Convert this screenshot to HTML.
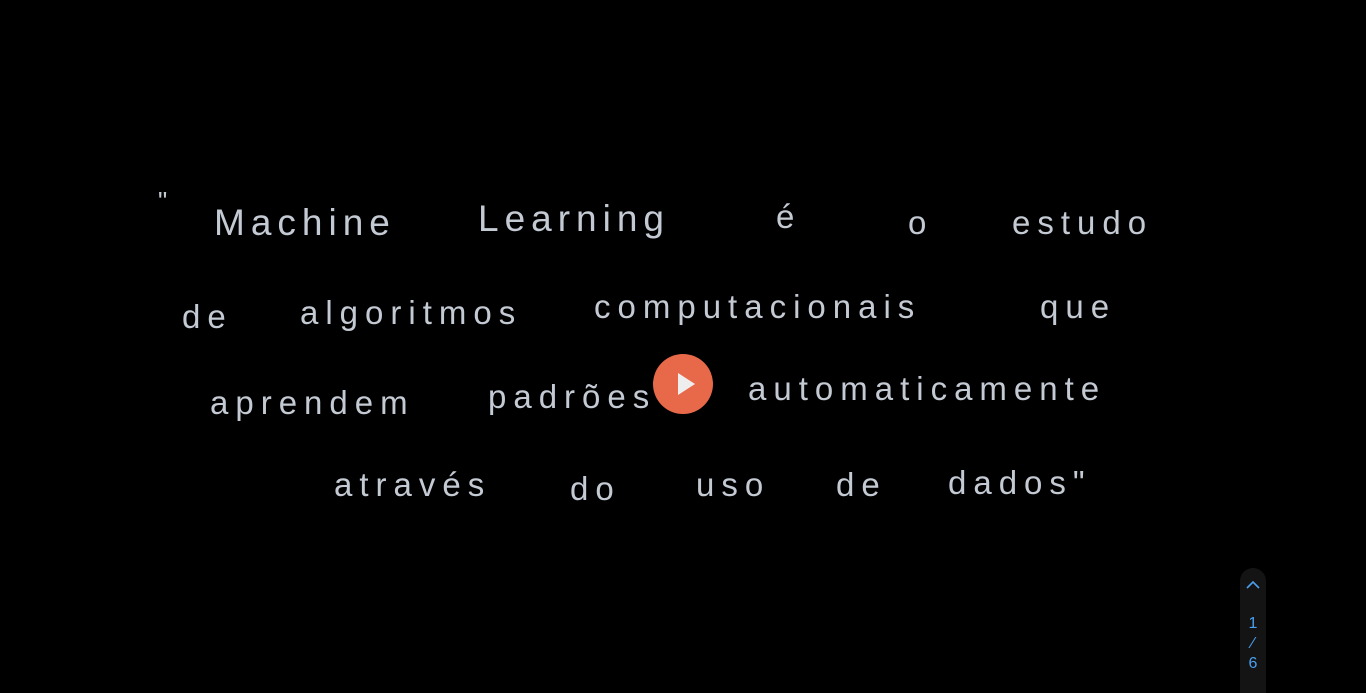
<!DOCTYPE html>
<html><head><style>
html,body{margin:0;width:1366px;height:693px;background:#000;overflow:hidden;position:relative;font-family:"Liberation Sans",sans-serif}
.w{position:absolute;color:#c4cad3;font-size:33px;letter-spacing:7px;font-weight:normal;line-height:1;white-space:nowrap}
.play{position:absolute;left:653px;top:354px;width:60px;height:60px;border-radius:50%;background:#e8694a}
.play:after{content:"";position:absolute;left:25px;top:19px;border-left:17px solid #eee;border-top:11px solid transparent;border-bottom:11px solid transparent}
.pan{position:absolute;left:1240px;top:568px;width:26px;height:140px;border-radius:13px;background:#141414;color:#4a9ff0;text-align:center;font-size:16px}
</style></head><body>
<div class="w" style="left:158px;top:188px;font-size:26px">"</div>
<div class="w" style="left:214px;top:204px;font-size:37px;letter-spacing:6px">Machine</div>
<div class="w" style="left:478px;top:200px;font-size:37px;letter-spacing:6px">Learning</div>
<div class="w" style="left:776px;top:200px">é</div>
<div class="w" style="left:908px;top:206px">o</div>
<div class="w" style="left:1012px;top:206px">estudo</div>
<div class="w" style="left:182px;top:300px">de</div>
<div class="w" style="left:300px;top:296px">algoritmos</div>
<div class="w" style="left:594px;top:290px">computacionais</div>
<div class="w" style="left:1040px;top:290px">que</div>
<div class="w" style="left:210px;top:386px">aprendem</div>
<div class="w" style="left:488px;top:380px">padrões</div>
<div class="w" style="left:748px;top:372px">automaticamente</div>
<div class="w" style="left:334px;top:468px">através</div>
<div class="w" style="left:570px;top:472px">do</div>
<div class="w" style="left:696px;top:468px">uso</div>
<div class="w" style="left:836px;top:468px">de</div>
<div class="w" style="left:948px;top:466px">dados"</div>
<div class="play"></div>
<div class="pan">
<svg width="26" height="30" style="display:block"><path d="M7 20 L13 14 L19 20" fill="none" stroke="#4a9ff0" stroke-width="1.6"/></svg>
<div style="margin-top:16px;line-height:20px">1<br>⁄<br>6</div>
</div>
</body></html>
